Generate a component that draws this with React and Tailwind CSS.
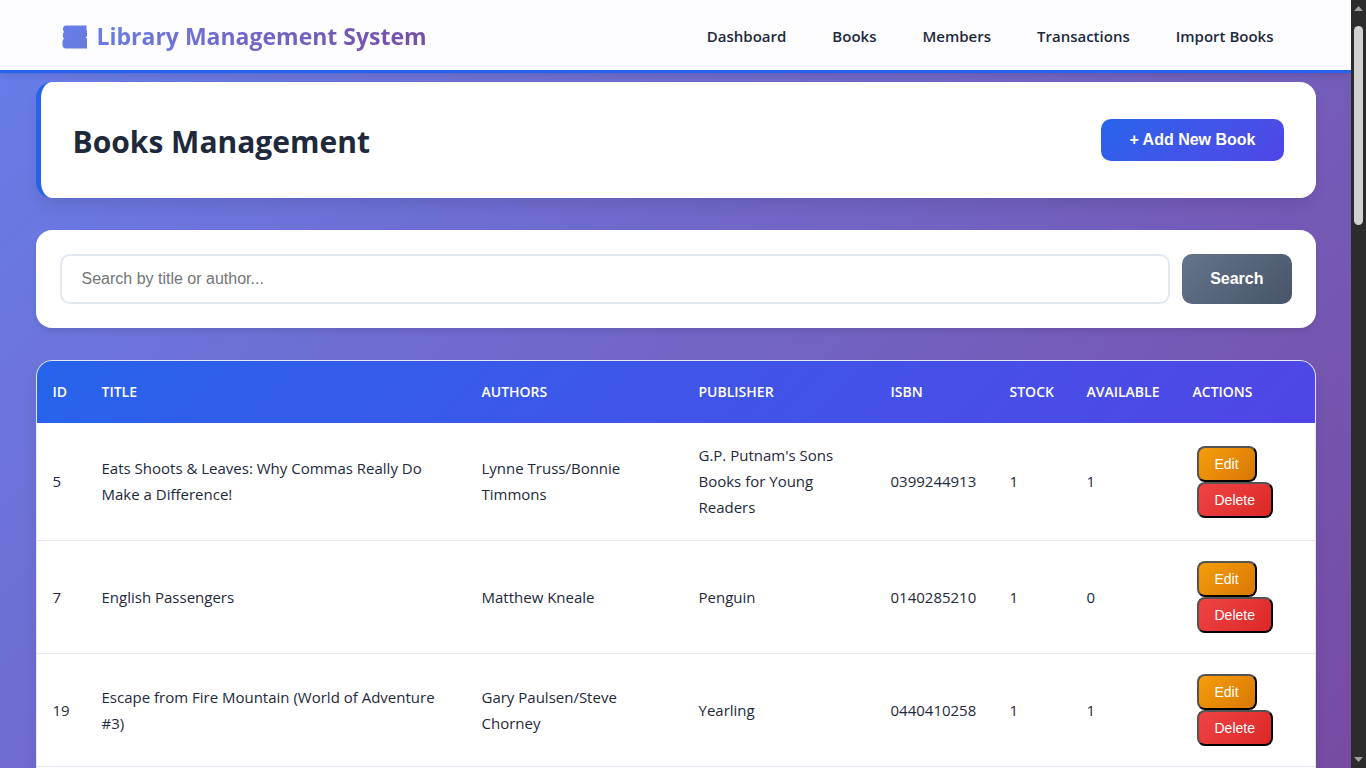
import React from "react";

const links = ["Dashboard", "Books", "Members", "Transactions", "Import Books"];

const columns = [
  { name: "ID", width: "w-[49px]" },
  { name: "Title", width: "" },
  { name: "Authors", width: "w-[217px]" },
  { name: "Publisher", width: "w-[192px]" },
  { name: "ISBN", width: "w-[119px]" },
  { name: "Stock", width: "w-[77px]" },
  { name: "Available", width: "w-[106px]" },
  { name: "Actions", width: "w-[138px]" },
];

const books = [
  {
    id: 5,
    title: "Eats Shoots & Leaves: Why Commas Really Do Make a Difference!",
    authors: "Lynne Truss/Bonnie Timmons",
    publisher: "G.P. Putnam's Sons Books for Young Readers",
    isbn: "0399244913",
    stock: 1,
    available: 1,
  },
  {
    id: 7,
    title: "English Passengers",
    authors: "Matthew Kneale",
    publisher: "Penguin",
    isbn: "0140285210",
    stock: 1,
    available: 0,
  },
  {
    id: 19,
    title: "Escape from Fire Mountain (World of Adventure #3)",
    authors: "Gary Paulsen/Steve Chorney",
    publisher: "Yearling",
    isbn: "0440410258",
    stock: 1,
    available: 1,
  },
];

function BookIcon() {
  return (
    <svg width="26" height="24" viewBox="0 0 26 24" aria-hidden="true">
      <defs>
        <linearGradient id="book" x1="0" y1="0" x2="1" y2="1">
          <stop offset="0" stopColor="#667eea" />
          <stop offset="1" stopColor="#687add" />
        </linearGradient>
      </defs>
      <path
        fill="url(#book)"
        d="M4 0.5H24.500V5L25 5.500V11.500L23.500 12.500L25 13.500V23.500H4C1.500 23.500 0.500 22 0.500 19.500V17C0.500 15.500 1 14.500 2 13.500C1 12.500 0.800 11.500 0.800 10C0.800 8.500 1.300 7.700 2 7C1.200 6 1 5 1 3.800C1 1.800 2 0.500 4 0.500Z"
      />
    </svg>
  );
}

function Header() {
  return (
    <header className="relative border-b-[3px] border-[#2563eb] bg-[#fdfdff] shadow-[0_4px_6px_-1px_rgba(0,0,0,0.1)]">
      <div className="mx-auto flex h-[70px] max-w-[1280px] items-center justify-between pr-[42px] pl-[26px]">
        <div className="flex items-center gap-[9px] pt-1">
          <BookIcon />
          <span className="bg-linear-135 from-[#667eea] to-[#764ba2] bg-clip-text pb-0.5 text-[23px] leading-8 font-bold text-transparent">
            Library Management System
          </span>
        </div>
        <nav className="flex gap-[46px] pt-0.5">
          {links.map((l) => (
            <a key={l} href="#" className="text-[15px] leading-6 font-semibold text-[#1e293b]">
              {l}
            </a>
          ))}
        </nav>
      </div>
    </header>
  );
}

function BookRow({ book }) {
  const cell = "px-4 pt-[19px] pb-5";
  return (
    <tr className="border-b border-[#e2e8f0]">
      <td className={cell}>{book.id}</td>
      <td className={cell}>{book.title}</td>
      <td className={cell}>{book.authors}</td>
      <td className={cell}>{book.publisher}</td>
      <td className={cell}>{book.isbn}</td>
      <td className={cell}>{book.stock}</td>
      <td className={cell}>{book.available}</td>
      <td className="px-5 py-5">
        <div className="flex flex-col items-start font-['Liberation_Sans',sans-serif] text-[14px] leading-4 text-white">
          <button className="rounded-lg border-2 border-black bg-linear-135 from-[#f59e0b] to-[#d97706] px-4 py-2 [border-style:outset]">
            Edit
          </button>
          <button className="rounded-lg border-2 border-black bg-linear-135 from-[#ef4444] to-[#dc2626] px-4 py-2 [border-style:outset]">
            Delete
          </button>
        </div>
      </td>
    </tr>
  );
}

function ScrollTrack() {
  return (
    <div aria-hidden="true" className="flex w-[15px] shrink-0 flex-col items-center justify-between bg-[#2c2c2c] py-[6px]">
      <div className="flex flex-col items-center gap-[15px]">
        <svg width="9" height="5" viewBox="0 0 9 5">
          <path d="M0 5L4.500 0L9 5Z" fill="#9f9f9f" />
        </svg>
        <div className="h-[199px] w-[9px] rounded-full bg-[#d1d1d1]" />
      </div>
      <svg width="9" height="5" viewBox="0 0 9 5">
        <path d="M0 0H9L4.500 5Z" fill="#9f9f9f" />
      </svg>
    </div>
  );
}

export default function App() {
  return (
    <div className="flex h-screen overflow-hidden font-['Open_Sans','Noto_Sans',sans-serif] text-[#1e293b]">
      <div className="min-w-0 flex-1 overflow-hidden bg-linear-135 from-[#667eea] to-[#764ba2]">
        <Header />
        <main className="mx-auto flex max-w-[1280px] flex-col gap-8 pt-[9px]">
          <section className="flex items-center justify-between rounded-2xl border-l-[5px] border-[#2563eb] bg-white py-[34px] pr-8 pl-8 shadow-[0_10px_15px_-3px_rgba(0,0,0,0.1)]">
            <h1 className="pt-1 text-[30px] leading-[44px] font-bold">Books Management</h1>
            <button className="rounded-[10px] bg-linear-135 from-[#2563eb] to-[#4f46e5] px-7 py-3 font-['Liberation_Sans',sans-serif] text-[16px] leading-[18px] font-bold text-white">
              + Add New Book
            </button>
          </section>

          <form
            onSubmit={(e) => e.preventDefault()}
            className="flex gap-3 rounded-2xl bg-white p-6 font-['Liberation_Sans',sans-serif] text-[16px] shadow-[0_4px_6px_-1px_rgba(0,0,0,0.1)]"
          >
            <input
              type="text"
              aria-label="Search by title or author"
              placeholder="Search by title or author..."
              className="h-[50px] min-w-0 flex-1 rounded-[10px] border-2 border-[#e2e8f0] bg-white px-5 placeholder:text-[#757575]"
            />
            <button className="rounded-[10px] bg-linear-135 from-[#64748b] to-[#475569] px-7 font-bold text-white">
              Search
            </button>
          </form>

          <section className="overflow-hidden rounded-2xl border border-[#e2e8f0] bg-white pb-4 shadow-[0_10px_15px_-3px_rgba(0,0,0,0.1)]">
            <table className="w-full table-fixed border-collapse text-left text-[15px] leading-[26px]">
              <thead className="bg-linear-135 from-[#2563eb] to-[#4f46e5] text-[14px] leading-[22px] text-white uppercase">
                <tr>
                  {columns.map((c) => (
                    <th key={c.name} scope="col" className={`px-4 py-5 font-semibold ${c.width}`}>
                      {c.name}
                    </th>
                  ))}
                </tr>
              </thead>
              <tbody>
                {books.map((b) => (
                  <BookRow key={b.id} book={b} />
                ))}
              </tbody>
            </table>
          </section>
        </main>
      </div>
      <ScrollTrack />
    </div>
  );
}
